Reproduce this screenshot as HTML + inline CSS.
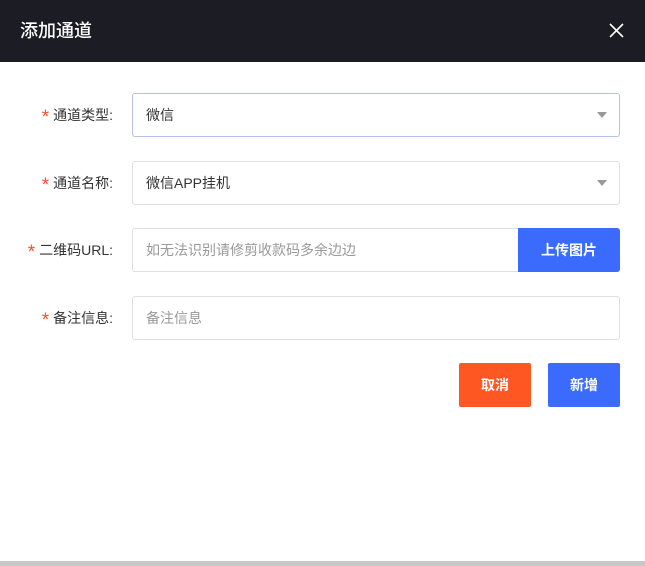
<!DOCTYPE html>
<html><head><meta charset="utf-8"><style>
*{box-sizing:border-box;margin:0;padding:0}
body{width:645px;height:566px;overflow:hidden;background:#fff;font-family:"Liberation Sans","Noto Sans CJK SC",sans-serif;position:relative}
.hd{position:absolute;left:0;top:0;width:645px;height:62px;background:#1c1c24;color:#fff;font-size:18px;line-height:62px;padding-left:20px;font-weight:500}
.x{position:absolute;left:609px;top:23px}
.lab{position:absolute;right:532px;font-size:14px;color:#333;line-height:20px;white-space:nowrap}
.lab b{color:#f5522d;font-weight:normal;font-size:19px;margin-right:4px;vertical-align:-3px;line-height:14px}
.in{position:absolute;left:132px;width:488px;height:44px;border:1px solid #dcdfe6;border-radius:3px;font-size:14px;color:#333;line-height:42px;padding-left:13px}
.ph{color:#999}
.arr{position:absolute;right:12px;top:18px;width:0;height:0;border-left:5px solid transparent;border-right:5px solid transparent;border-top:6px solid #999}
.btn{position:absolute;height:44px;border-radius:2px;color:#fff;font-size:14px;font-weight:bold;text-align:center;line-height:44px}
.bot{position:absolute;left:0;top:561px;width:645px;height:5px;background:#c8c8c8}
</style></head><body>
<div class="hd">添加通道</div>
<svg class="x" width="15" height="15" viewBox="0 0 15 15"><path d="M1 1L14 14M14 1L1 14" stroke="#fff" stroke-width="1.6"/></svg>

<div class="lab" style="top:105px"><b>*</b>通道类型:</div>
<div class="in" style="top:93px;border-color:#b4c1e8">微信<span class="arr"></span></div>

<div class="lab" style="top:173px"><b>*</b>通道名称:</div>
<div class="in" style="top:161px">微信APP挂机<span class="arr"></span></div>

<div class="lab" style="top:240px"><b>*</b>二维码URL:</div>
<div class="in ph" style="top:228px;width:390px;border-right:none;border-radius:3px 0 0 3px">如无法识别请修剪收款码多余边边</div>
<div class="btn" style="left:518px;top:228px;width:102px;background:#3a6bfc;border-radius:0 3px 3px 0">上传图片</div>

<div class="lab" style="top:308px"><b>*</b>备注信息:</div>
<div class="in ph" style="top:296px">备注信息</div>

<div class="btn" style="left:459px;top:363px;width:72px;background:#ff5722">取消</div>
<div class="btn" style="left:548px;top:363px;width:72px;background:#3a6bfc">新增</div>

<div class="bot"></div>
</body></html>
